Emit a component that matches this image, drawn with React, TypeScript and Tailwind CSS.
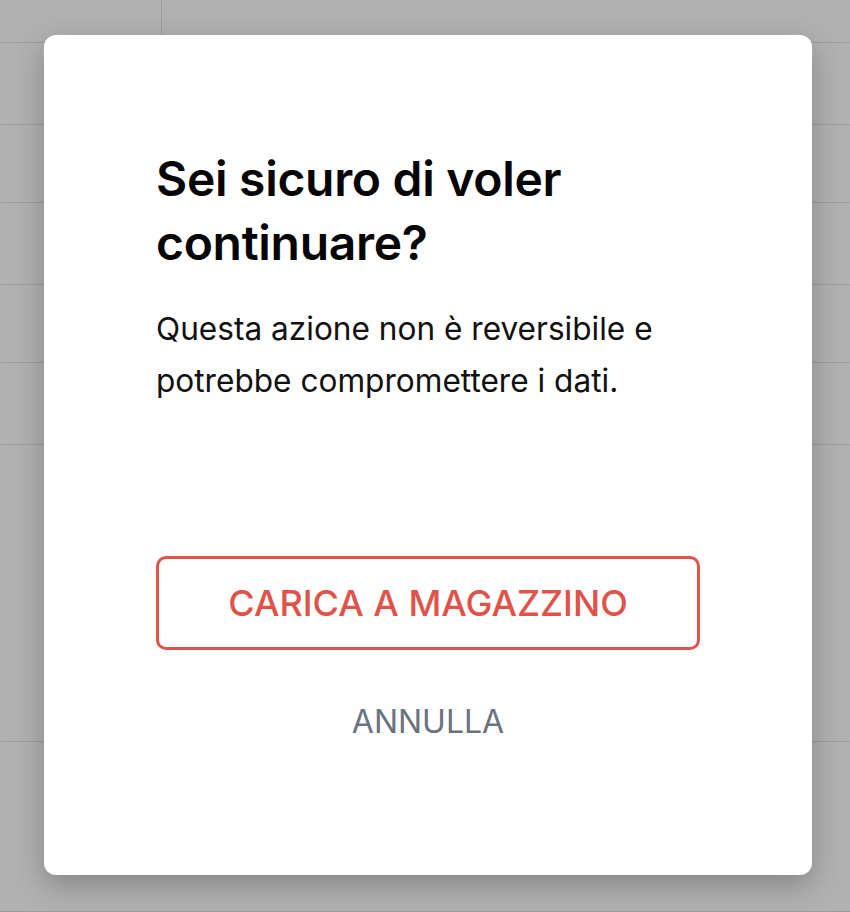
import React from "react";

export default function App() {
  const rows = [43, 82, 78, 82, 78, 82, 297, 170];
  return (
    <div className="relative h-[912px] w-[850px] overflow-hidden bg-white" style={{ fontFamily: "Inter, 'Noto Sans', sans-serif" }}>
      {/* background page */}
      <div className="flex flex-col">
        {rows.map((h, i) => (
          <div key={i} className="flex border-b border-[#dfe2e8]" style={{ height: h }}>
            <div className={i === 0 ? "w-[162px] border-r border-[#dfe2e8]" : "w-[162px]"} />
            <div className="flex-1" />
          </div>
        ))}
      </div>
      {/* overlay */}
      <div className="absolute inset-0 bg-[rgba(0,0,0,0.305)] pl-[44px] pt-[35px]">
        <div className="flex h-[840px] w-[768px] flex-col rounded-[12px] bg-white pl-[112px] pr-[112px] pt-[112px] shadow-[0_10px_30px_rgba(0,0,0,0.25)]">
          <h2 className="text-[48px] font-semibold leading-[64px] tracking-[-0.3px] text-[#050505]">
            Sei sicuro di voler
            <br />
            continuare?
          </h2>
          <p className="mt-[28px] text-[31.6px] leading-[52px] text-[#111111]">
            Questa azione non è reversibile e
            <br />
            potrebbe compromettere i dati.
          </p>
          <button className="mt-[149px] flex h-[94px] w-full items-center justify-center rounded-[10px] border-[3px] border-[#e0534b] text-[36px] font-medium text-[#e0534b]">
            CARICA A MAGAZZINO
          </button>
          <button className="mt-[48px] flex h-[48px] w-full items-center justify-center text-[32px] leading-[48px] font-normal text-[#6b7280]">
            ANNULLA
          </button>
        </div>
      </div>
    </div>
  );
}
